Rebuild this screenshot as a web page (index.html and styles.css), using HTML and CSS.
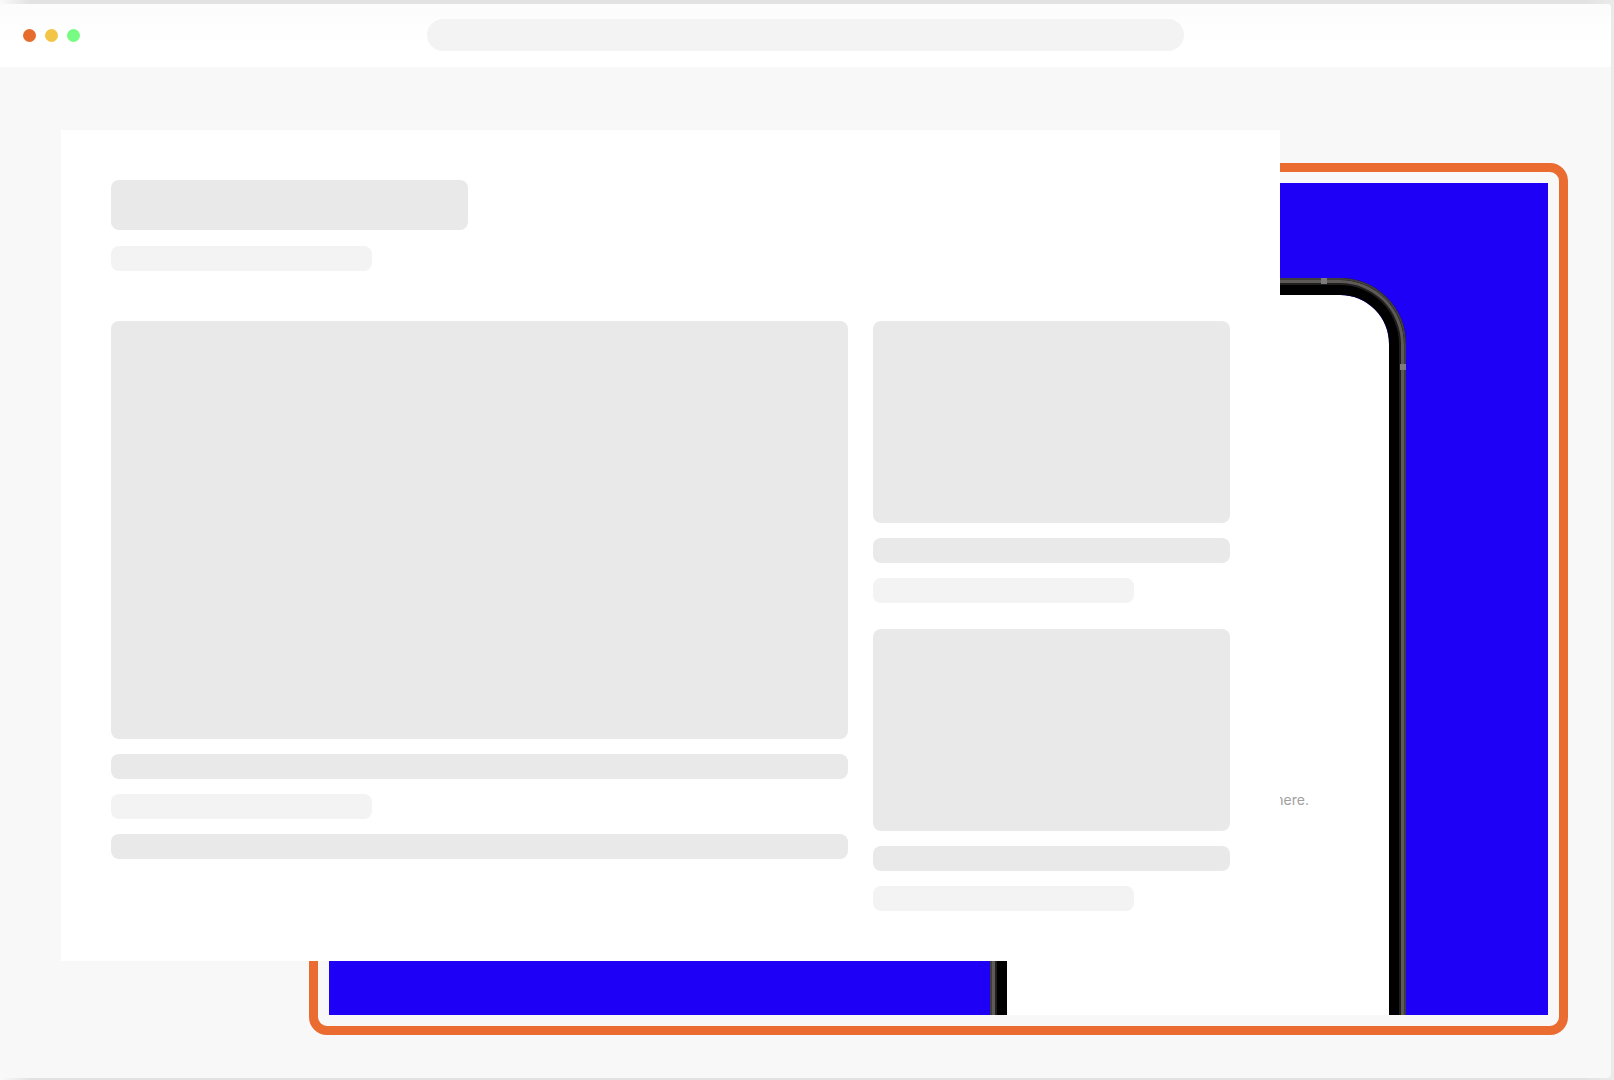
FILE: index.html
```html
<!DOCTYPE html>
<html lang="en">
<head>
    <meta charset="UTF-8">
    <meta name="viewport" content="width=device-width, initial-scale=1.0">
    <title>Preview</title>
    <link rel="stylesheet" href="styles.css">
</head>
<body>

<div class="window">
    <header class="toolbar">
        <div class="dots">
            <span class="dot red"></span>
            <span class="dot yellow"></span>
            <span class="dot green"></span>
        </div>
        <input class="address" type="text" aria-label="Address">
    </header>

    <main class="stage">
        <!-- Highlighted frame, sits behind the card -->
        <section class="frame">
            <div class="canvas">
                <div class="phone">
                    <span class="mark mark-top"></span>
                    <span class="mark mark-side"></span>
                    <p class="note">here.</p>
                </div>
            </div>
        </section>

        <!-- Skeleton page -->
        <section class="card">
            <div class="heading">
                <div class="block title"></div>
                <div class="bar light"></div>
            </div>
            <div class="columns">
                <div class="item">
                    <div class="block picture"></div>
                    <div class="bar"></div>
                    <div class="bar light"></div>
                    <div class="bar"></div>
                </div>
                <div class="side">
                    <div class="item">
                        <div class="block thumb"></div>
                        <div class="bar"></div>
                        <div class="bar light"></div>
                    </div>
                    <div class="item">
                        <div class="block thumb"></div>
                        <div class="bar"></div>
                        <div class="bar light"></div>
                    </div>
                </div>
            </div>
        </section>
    </main>
</div>

</body>
</html>
```

FILE: styles.css
```css
* {
    box-sizing: border-box;
}

body {
    font-family: Inter, "Liberation Sans", Arial, sans-serif;
    background: linear-gradient(90deg, #fafafa, #e2e2e2 30px, #e2e2e2 calc(100% - 30px), #ebebeb);
    display: flex;
    min-height: 100vh;
    margin: 0;
    padding: 4px 3px 2px 0;
}

.window {
    flex: 1;
    display: flex;
    flex-direction: column;
    background-color: #f8f8f8;
    border-radius: 4px;
    overflow: hidden;
}

/* Toolbar */
.toolbar {
    display: grid;
    grid-template-columns: 1fr 47% 1fr;
    align-items: center;
    height: 63px;
    padding-bottom: 1px;
    background: linear-gradient(#fcfcfc, #ffffff 40px);
}

.dots {
    display: flex;
    gap: 9px;
    padding-left: 23px;
}

.dot {
    width: 13px;
    height: 13px;
    border-radius: 50%;
}

.red {
    background-color: #e66c2e;
}

.yellow {
    background-color: #f2c546;
}

.green {
    background-color: #78fb82;
}

.address {
    width: 100%;
    height: 32px;
    padding: 0 16px;
    border: none;
    border-radius: 16px;
    background-color: #f3f3f3;
    font-size: 14px;
}

/* Card and frame overlap in the middle cell */
.stage {
    flex: 1;
    display: grid;
    grid-template-columns: 248px 1fr 288px;
    grid-template-rows: 33px auto 74px;
    align-content: start;
    padding: 63px 43px 43px 61px;
}

.card {
    grid-column: 1 / 3;
    grid-row: 1 / 3;
    z-index: 1;
    padding: 50px;
    background-color: #ffffff;
}

.frame {
    grid-column: 2 / 4;
    grid-row: 2 / 4;
    display: flex;
    padding: 11px;
    border: 9px solid #ea6c31;
    border-radius: 18px;
}

.canvas {
    flex: 1;
    display: flex;
    justify-content: flex-end;
    padding: 95px 142px 0 0;
    background-color: #1e00f7;
    overflow: hidden;
}

/* Skeleton */
.block {
    background-color: #e9e9e9;
    border-radius: 8px;
}

.bar {
    height: 25px;
    background-color: #e9e9e9;
    border-radius: 8px;
}

.light {
    width: 261px;
    background-color: #f3f3f3;
}

.heading {
    display: flex;
    flex-direction: column;
    gap: 16px;
    margin-bottom: 50px;
}

.title {
    width: 357px;
    height: 50px;
}

.columns {
    display: grid;
    grid-template-columns: 737fr 357fr;
    gap: 25px;
}

.side {
    display: flex;
    flex-direction: column;
    gap: 26px;
}

.item {
    display: flex;
    flex-direction: column;
    gap: 15px;
}

.picture {
    height: 418px;
}

.thumb {
    height: 202px;
}

/* Phone runs past the bottom of the canvas */
.phone {
    position: relative;
    width: 416px;
    margin-bottom: -80px;
    padding: 495px 80px 0 0;
    border: 17px solid #000000;
    border-radius: 66px;
    background-color: #ffffff;
    background-clip: padding-box;
}

.phone::before {
    content: "";
    position: absolute;
    inset: -17px;
    border: 2px solid #403d3d;
    border-radius: 66px;
    box-shadow: inset 0 0 0 3px #5e5a58, inset 0 0 0 5px #211f1e;
}

.mark {
    position: absolute;
    z-index: 1;
    width: 6px;
    height: 6px;
    background-color: #7e7b7c;
}

.mark-top {
    top: -17px;
    right: 62px;
}

.mark-side {
    top: 69px;
    right: -17px;
}

.note {
    margin: 0;
    font-size: 14px;
    line-height: 20px;
    text-align: right;
    color: #a0a0a0;
}
```
